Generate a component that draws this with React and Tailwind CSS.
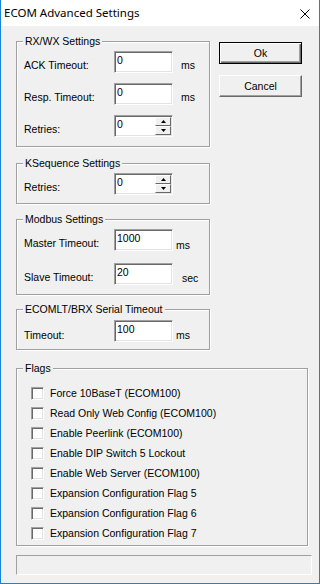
const sunken =
  "border-t border-l border-[#a0a0a0] border-b border-r border-b-white border-r-white shadow-[inset_1px_1px_0_#696969,inset_-1px_-1px_0_#e3e3e3] bg-white";

function Group({ title, className = "", children }) {
  return (
    <div
      className={
        "relative border border-[#a0a0a0] shadow-[inset_1px_1px_0_#ffffff,1px_1px_0_#ffffff] " +
        className
      }
    >
      <span className="absolute -top-[7px] left-[6px] bg-[#f0f0f0] px-[2px] leading-[13px]">
        {title}
      </span>
      {children}
    </div>
  );
}

function Field({ value }) {
  return (
    <div className={"h-[22px] w-[59px] pl-[2px] pt-[2px] " + sunken}>{value}</div>
  );
}

function Arrow({ down }) {
  return (
    <svg width="5" height="3" viewBox="0 0 5 3" className="block">
      <path d={down ? "M0 0h5L2.5 3z" : "M2.5 0L5 3H0z"} fill="#000" />
    </svg>
  );
}

function Spin({ value }) {
  return (
    <div className={"flex h-[22px] w-[59px] " + sunken}>
      <div className="flex-1 pl-[2px] pt-[2px]">{value}</div>
      <div className="flex flex-col pr-[1px] pt-[1px]">
        {[false, true].map((d) => (
          <div
            key={String(d)}
            className="flex h-[9px] w-[16px] items-center justify-center border border-t-white border-l-white border-b-[#696969] border-r-[#696969] bg-[#f0f0f0]"
          >
            <Arrow down={d} />
          </div>
        ))}
      </div>
    </div>
  );
}

function Row({ label, children, unit, unitClass = "ml-[8px] pt-[8px]", labelClass = "pt-[8px]" }) {
  return (
    <div className="flex items-start">
      <div className={"w-[90px] " + labelClass}>{label}</div>
      {children}
      {unit && <div className={unitClass}>{unit}</div>}
    </div>
  );
}

const flags = [
  "Force 10BaseT (ECOM100)",
  "Read Only Web Config (ECOM100)",
  "Enable Peerlink (ECOM100)",
  "Enable DIP Switch 5 Lockout",
  "Enable Web Server (ECOM100)",
  "Expansion Configuration Flag 5",
  "Expansion Configuration Flag 6",
  "Expansion Configuration Flag 7",
];

export default function App() {
  return (
    <div className="flex h-[584px] w-[320px] flex-col border-x border-b border-[#1883d7] bg-[#f0f0f0] font-['Liberation_Sans',Arial,sans-serif] text-[10.5px] leading-[13px] text-black">
      {/* Title bar */}
      <div className="flex h-[26px] shrink-0 items-center justify-between bg-white pl-[3px] pr-[9px]">
        <span className="font-['Noto_Sans',sans-serif] text-[11.5px] leading-[16px]">
          ECOM Advanced Settings
        </span>
        <svg width="10" height="10" viewBox="0 0 10 10" className="mt-[2px]">
          <path d="M0.5 0.5L9.5 9.5M9.5 0.5L0.5 9.5" stroke="#000" strokeWidth="1" />
        </svg>
      </div>

      <div className="flex flex-col pl-[15px] pt-[15px]">
        <div className="flex items-start">
          <div className="flex w-[194px] flex-col">
            <Group title="RX/WX Settings" className="flex flex-col gap-[10px] pb-[9px] pl-[7px] pt-[9px]">
              <Row label="ACK Timeout:" unit="ms">
                <Field value="0" />
              </Row>
              <Row label="Resp. Timeout:" unit="ms">
                <Field value="0" />
              </Row>
              <Row label="Retries:">
                <Spin value="0" />
              </Row>
            </Group>

            <Group title="KSequence Settings" className="mt-[16px] pb-[8px] pl-[7px] pt-[9px]">
              <Row label="Retries:">
                <Spin value="0" />
              </Row>
            </Group>

            <Group title="Modbus Settings" className="mt-[15px] flex flex-col gap-[11px] pb-[9px] pl-[7px] pt-[9px]">
              <Row label="Master Timeout:" unit="ms" unitClass="ml-[3px] pt-[10px]">
                <Field value="1000" />
              </Row>
              <Row label="Slave Timeout:" unit="sec" unitClass="ml-[9px] pt-[9px]">
                <Field value="20" />
              </Row>
            </Group>

            <Group title="ECOMLT/BRX Serial Timeout" className="mt-[14px] pb-[7px] pl-[7px] pt-[10px]">
              <Row label="Timeout:" unit="ms" labelClass="pt-[9px]" unitClass="ml-[3px] pt-[9px]">
                <Field value="100" />
              </Row>
            </Group>
          </div>

          <div className="ml-[9px] mt-[1px] flex flex-col gap-[11px]">
            <button className="h-[22px] w-[83px] border border-[#000] bg-[#f0f0f0] shadow-[inset_1px_1px_0_#ffffff,inset_-1px_-1px_0_#696969,inset_-2px_-2px_0_#a0a0a0]">
              Ok
            </button>
            <button className="h-[22px] w-[83px] border border-t-white border-l-white border-b-[#696969] border-r-[#696969] bg-[#f0f0f0] shadow-[inset_-1px_-1px_0_#a0a0a0]">
              Cancel
            </button>
          </div>
        </div>

        <Group title="Flags" className="mt-[18px] w-[292px] pb-[2px] pl-[14px] pt-[14px]">
          {flags.map((f) => (
            <div key={f} className="flex h-[20px] items-center">
              <div className={"h-[13px] w-[13px] " + sunken} />
              <span className="ml-[6px]">{f}</span>
            </div>
          ))}
        </Group>

        <div className="mt-[9px] h-[20px] w-[296px] border border-[#a0a0a0] border-b-white border-r-white" />
      </div>
    </div>
  );
}
